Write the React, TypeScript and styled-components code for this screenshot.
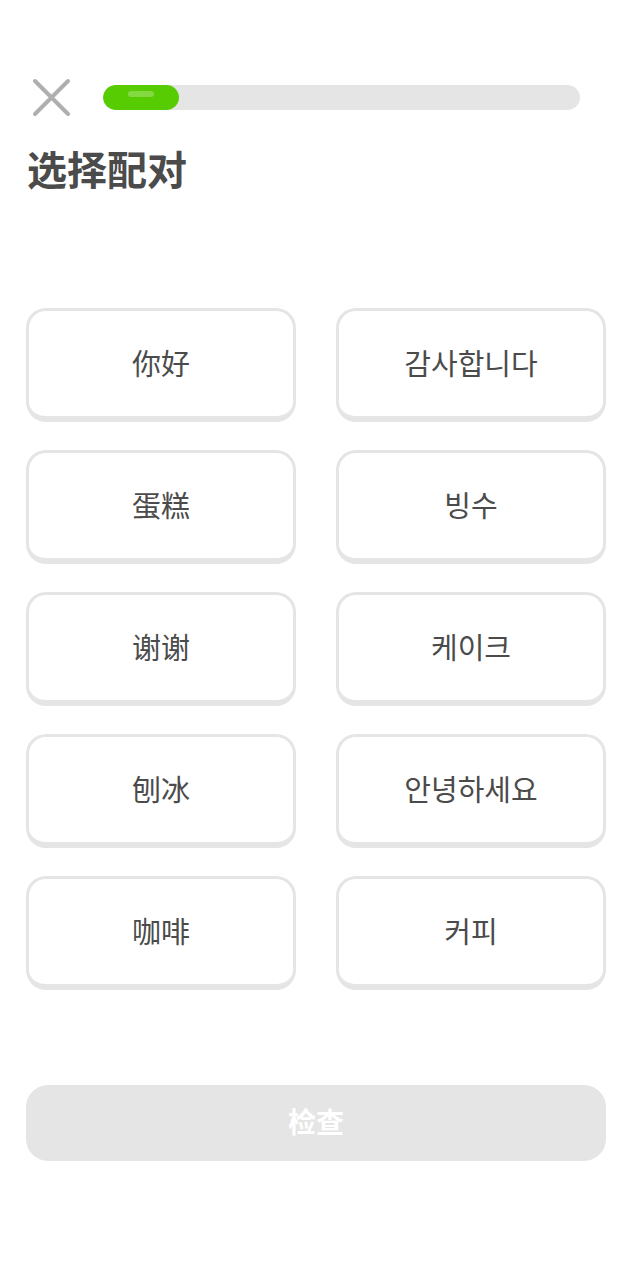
import { Fragment } from 'react';
import styled, { createGlobalStyle } from 'styled-components';

const GlobalStyle = createGlobalStyle`
	body {
		margin: 0;
		background: #ffffff;
		font-family: "Noto Sans", "Noto Sans CJK SC", "Noto Sans CJK KR", sans-serif;
	}
`;

const pairs = [
	['你好', '감사합니다'],
	['蛋糕', '빙수'],
	['谢谢', '케이크'],
	['刨冰', '안녕하세요'],
	['咖啡', '커피']
];

const Page = styled.div`
	display: flex;
	flex-direction: column;
	min-height: 1264px;
	padding: 78px 26px 0 26px;
	box-sizing: border-box;
`;

const Header = styled.div`
	display: flex;
	align-items: center;
	gap: 32px;
	padding: 0 26px 0 6px;
`;

const CloseButton = styled.button`
	display: flex;
	align-items: center;
	justify-content: center;
	width: 39px;
	height: 39px;
	padding: 0;
	border: none;
	background: none;
	cursor: pointer;
`;

const ProgressTrack = styled.div`
	flex: 1;
	height: 25px;
	border-radius: 13px;
	background: #e5e5e5;
	overflow: hidden;
`;

const ProgressFill = styled.div`
	position: relative;
	height: 100%;
	border-radius: 13px;
	background: #58cc02;
	&::after {
		content: '';
		position: absolute;
		left: 25px;
		top: 6px;
		width: 26px;
		height: 6px;
		border-radius: 3px;
		background: rgba(255, 255, 255, 0.25);
	}
`;

const Title = styled.h1`
	margin: 27px 0 0 1px;
	font-family: "Noto Sans CJK SC", sans-serif;
	font-size: 40px;
	font-weight: 700;
	line-height: 48px;
	color: #4b4b4b;
`;

const Grid = styled.div`
	display: grid;
	grid-template-columns: 1fr 1fr;
	column-gap: 40px;
	row-gap: 28px;
	margin-top: 116px;
`;

const Card = styled.button`
	display: flex;
	align-items: center;
	justify-content: center;
	height: 114px;
	box-sizing: border-box;
	padding: 0 0 4px 0;
	border: 3px solid #e5e5e5;
	border-bottom-width: 6px;
	border-radius: 20px;
	background: #ffffff;
	font-family: ${({ lang }) =>
		lang === 'ko' ? '"Noto Sans CJK KR", sans-serif' : '"Noto Sans CJK SC", sans-serif'};
	font-size: 29px;
	font-weight: 400;
	color: #4b4b4b;
	cursor: pointer;
`;

const CheckButton = styled.button`
	display: flex;
	align-items: center;
	justify-content: center;
	height: 76px;
	margin-top: 95px;
	padding: 0 0 5px 0;
	border: none;
	border-radius: 22px;
	background: #e5e5e5;
	font-family: "Noto Sans CJK SC", sans-serif;
	font-size: 28px;
	font-weight: 700;
	color: #ffffff;
`;

const CloseIcon = () => (
	<svg width="39" height="39" viewBox="0 0 39 39">
		<path
			d="M3 3 L36 36 M36 3 L3 36"
			stroke="#afafaf"
			strokeWidth="4"
			strokeLinecap="round"
		/>
	</svg>
);

const App = () => {
	const progress = 16;

	return (
		<>
			<GlobalStyle />
			<Page>
				<Header>
					<CloseButton aria-label="close">
						<CloseIcon />
					</CloseButton>
					<ProgressTrack>
						<ProgressFill style={{ width: `${progress}%` }} />
					</ProgressTrack>
				</Header>
				<Title>选择配对</Title>
				<Grid>
					{pairs.map(([zh, ko]) => (
						<Fragment key={zh}>
							<Card lang="zh">{zh}</Card>
							<Card lang="ko">{ko}</Card>
						</Fragment>
					))}
				</Grid>
				<CheckButton disabled>检查</CheckButton>
			</Page>
		</>
	);
};

export default App;
